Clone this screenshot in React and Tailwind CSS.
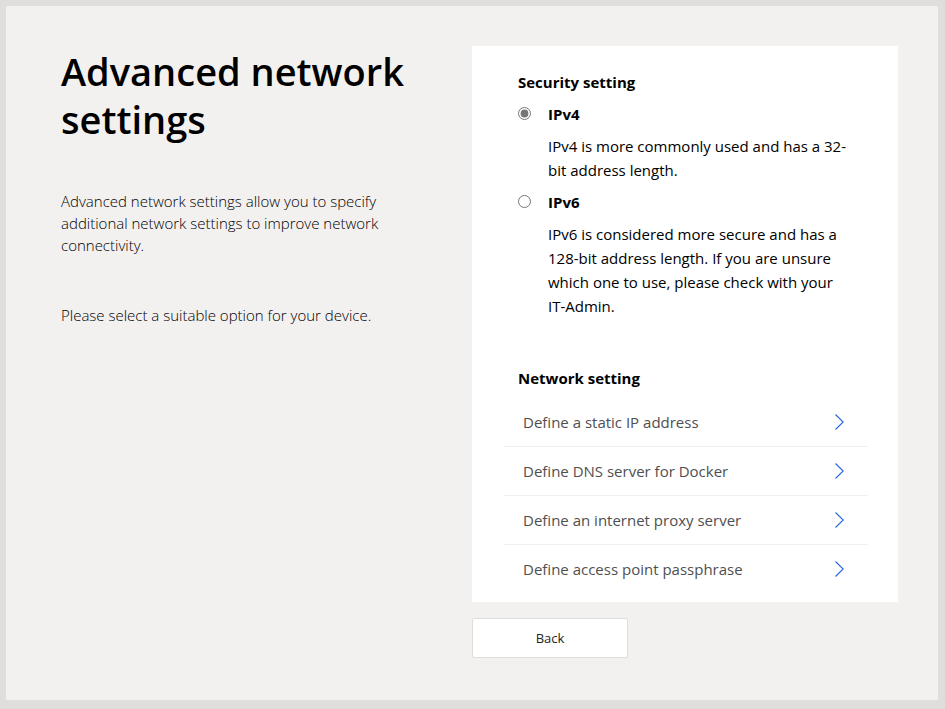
import { useState } from 'react';

const protocols = [
  {
    id: 'ipv4',
    label: 'IPv4',
    text: 'IPv4 is more commonly used and has a 32-bit address length.',
  },
  {
    id: 'ipv6',
    label: 'IPv6',
    text: 'IPv6 is considered more secure and has a 128-bit address length. If you are unsure which one to use, please check with your IT-Admin.',
  },
];

const networkSettings = [
  'Define a static IP address',
  'Define DNS server for Docker',
  'Define an internet proxy server',
  'Define access point passphrase',
];

function Chevron() {
  return (
    <svg
      className="h-4 w-[9px] shrink-0"
      viewBox="0 0 9 16"
      fill="none"
      stroke="#2468dc"
      strokeWidth="1.1"
      aria-hidden="true"
    >
      <path d="M0.5 0.5 8.2 8 0.5 15.5" />
    </svg>
  );
}

function SecuritySetting() {
  const [selected, setSelected] = useState('ipv4');
  return (
    <fieldset className="px-[46px]">
      <legend className="text-[15px] leading-6 font-bold">Security setting</legend>
      {protocols.map((p) => (
        <div key={p.id} className="flex items-start gap-[17px] pt-2">
          <input
            type="radio"
            id={p.id}
            name="protocol"
            checked={selected === p.id}
            onChange={() => setSelected(p.id)}
            aria-describedby={p.id + '-text'}
            className="mt-[5px] size-[13px] shrink-0 accent-[#767676]"
          />
          <div className="min-w-0">
            <label htmlFor={p.id} className="block text-[15px] leading-6 font-bold">
              {p.label}
            </label>
            <p id={p.id + '-text'} className="pt-2 text-[15px] leading-6">
              {p.text}
            </p>
          </div>
        </div>
      ))}
    </fieldset>
  );
}

function NetworkSetting() {
  return (
    <section className="pt-12">
      <h2 className="px-[46px] text-[15px] leading-6 font-bold">Network setting</h2>
      <ul className="mr-[30px] ml-8 divide-y divide-[#f0f0f0] pt-2">
        {networkSettings.map((item) => (
          <li key={item}>
            <a
              href="#"
              className="flex h-12 items-center justify-between pr-6 pl-[19px] text-[15px] text-[#4f4f4f]"
            >
              {item}
              <Chevron />
            </a>
          </li>
        ))}
      </ul>
    </section>
  );
}

export default function App() {
  return (
    <div className="flex min-h-screen bg-[#dfdedc] pt-1.5 pr-[7px] pb-[9px] pl-1.5 font-['Open_Sans','Noto_Sans',sans-serif] text-black">
      <main className="flex flex-1 items-start gap-[55px] rounded-xs bg-[#f3f1f0] pt-10 pr-10 pb-10 pl-[55px]">
        <div className="min-w-0 flex-[356]">
          <h1 className="pt-px text-[38px] leading-12 font-semibold">Advanced network settings</h1>
          <p className="pt-[47px] text-[15px] leading-[22px] font-light">
            Advanced network settings allow you to specify additional network settings to improve
            network connectivity.
          </p>
          <p className="pt-12 text-[15px] leading-[22px] font-light">
            Please select a suitable option for your device.
          </p>
        </div>
        <div className="min-w-0 flex-[426]">
          <div className="bg-white pt-6 pb-[9px]">
            <SecuritySetting />
            <NetworkSetting />
          </div>
          <button
            type="button"
            className="mt-4 h-10 w-[156px] rounded-xs border border-[#dfdedc] bg-white pt-0.5 text-[13px] font-medium text-[#222]"
          >
            Back
          </button>
        </div>
      </main>
    </div>
  );
}
